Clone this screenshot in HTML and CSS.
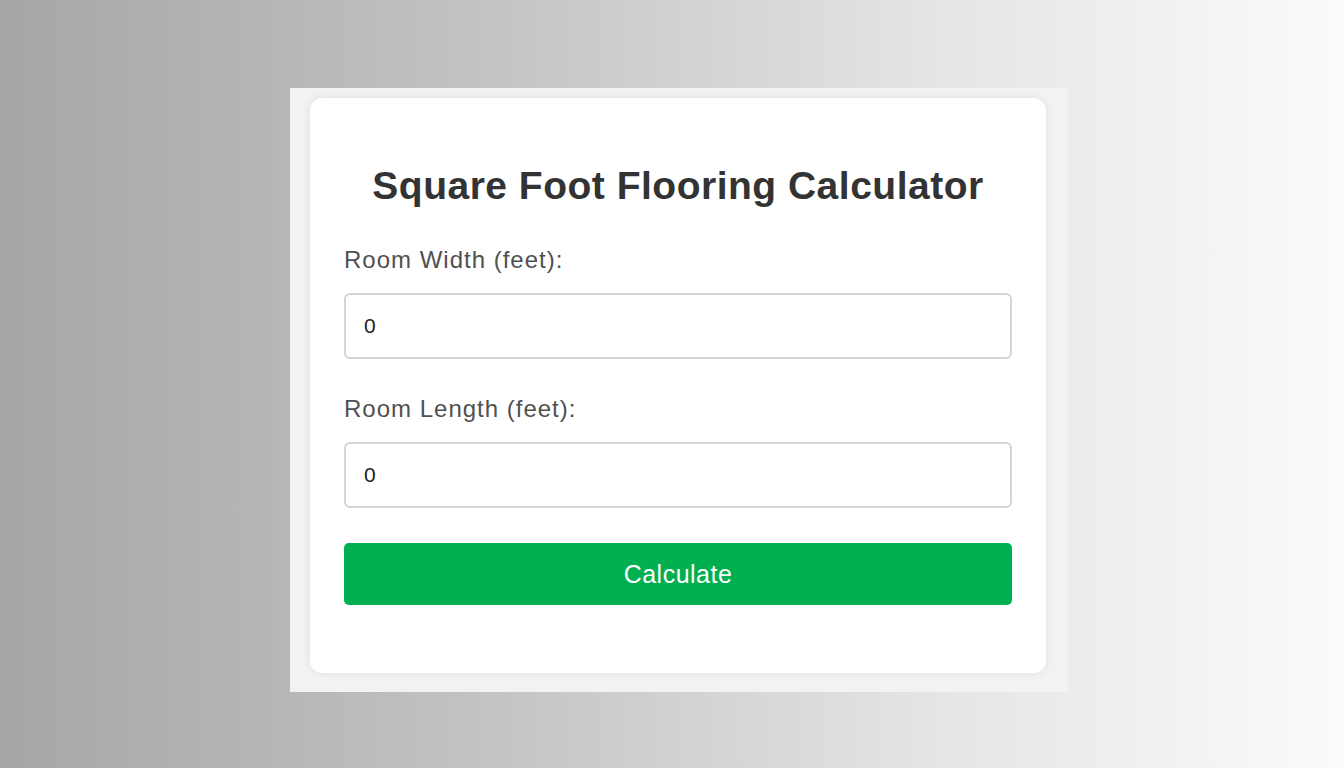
FILE: index.html
```html
<!DOCTYPE html>
<html lang="en">
<head>
<meta charset="utf-8">
<title>Square Foot Flooring Calculator</title>
<link rel="stylesheet" href="styles.css">
</head>
<body>
  <div class="frame">
    <div class="card">
      <h1 class="title">Square Foot Flooring Calculator</h1>
      <label class="label" for="w">Room Width (feet):</label>
      <input class="field" id="w" type="text" value="0">
      <label class="label" for="l">Room Length (feet):</label>
      <input class="field" id="l" type="text" value="0">
      <button class="btn" type="button">Calculate</button>
    </div>
  </div>
</body>
</html>
```

FILE: styles.css
```css
html, body {
  margin: 0;
  padding: 0;
  height: 100%;
}
body {
  background: linear-gradient(to right, #a6a6a6 0%, #c2c2c2 35%, #e5e5e5 70%, #fbfbfb 100%);
  font-family: "Liberation Sans", Arial, sans-serif;
  padding: 88px 0 0 290px;
  box-sizing: border-box;
}
.frame {
  width: 778px;
  height: 604px;
  background: #f2f2f2;
  box-sizing: border-box;
  padding: 10px 22px 19px 20px;
}
.card {
  background: #ffffff;
  border-radius: 12px;
  box-shadow: 0 0 8px rgba(0, 0, 0, 0.08);
  height: 575px;
  box-sizing: border-box;
  padding: 66px 34px 34px 34px;
  display: flex;
  flex-direction: column;
}
.title {
  margin: 0;
  font-size: 39px;
  line-height: 44px;
  font-weight: bold;
  letter-spacing: 0.5px;
  color: #333333;
  text-align: center;
}
.label {
  margin-top: 38px;
  font-size: 24px;
  line-height: 28px;
  letter-spacing: 1px;
  color: #505050;
}
.field {
  margin-top: 19px;
  height: 66px;
  box-sizing: border-box;
  border: 2px solid #d4d4d4;
  border-radius: 6px;
  padding: 0 18px;
  font-family: "Liberation Sans", Arial, sans-serif;
  font-size: 21px;
  color: #222222;
  background: #ffffff;
  outline: none;
}
.field + .label {
  margin-top: 36px;
}
.btn {
  margin-top: 35px;
  height: 62px;
  border: none;
  border-radius: 5px;
  background: #00af50;
  color: #ffffff;
  font-family: "Liberation Sans", Arial, sans-serif;
  font-size: 25px;
  letter-spacing: 0.5px;
  cursor: pointer;
}
```
